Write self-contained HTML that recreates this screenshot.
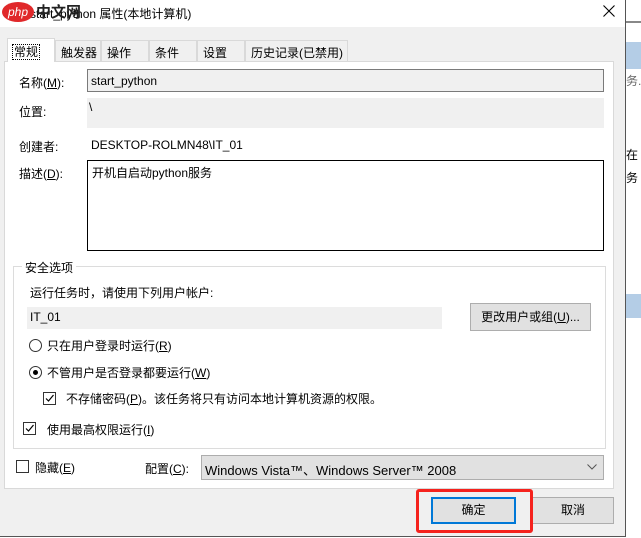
<!DOCTYPE html>
<html><head><meta charset="utf-8"><style>
*{box-sizing:border-box;margin:0;padding:0}
body{width:641px;height:538px;overflow:hidden;background:#fff;font-family:"Liberation Sans","Microsoft YaHei","Noto Sans CJK SC",sans-serif;font-size:12px;color:#000;position:relative}
.a{position:absolute;white-space:nowrap}
.t{position:absolute;top:40px;height:21px;border:1px solid #d9d9d9;border-bottom:none;background:#f0f0f0;padding:3px 0 0 5px;font-size:12px}
.cb{position:absolute;width:13px;height:13px;border:1px solid #333;background:#fff}
.rd{position:absolute;width:13px;height:13px;border:1px solid #333;border-radius:50%;background:#fff}
u{text-decoration:underline}
</style></head><body>
<div class="a" style="left:626px;top:0;width:15px;height:538px;background:#fff"></div>
<div class="a" style="left:626px;top:21px;width:15px;height:2px;background:#888"></div>
<div class="a" style="left:626px;top:42px;width:15px;height:27px;background:#b4cde6"></div>
<div class="a" style="left:626px;top:72px;font-size:12px;color:#666">务.</div>
<div class="a" style="left:626px;top:146px">在</div>
<div class="a" style="left:626px;top:169px">务</div>
<div class="a" style="left:626px;top:294px;width:15px;height:24px;background:#b4cde6"></div>
<div class="a" style="left:0;top:0;width:626px;height:537px;background:#f0f0f0;border-right:1px solid #555;border-bottom:1px solid #555"></div>
<div class="a" style="left:0;top:0;width:625px;height:27px;background:#fff"></div>
<div class="a" style="left:30px;top:5px;font-size:12px">start_python 属性(本地计算机)</div>
<div class="a" style="left:2px;top:2px;width:32px;height:20px;border-radius:50%;background:#e0282a;color:#fff;font-size:12px;font-style:italic;text-align:center;line-height:20px">php</div>
<div class="a" style="left:36px;top:1px;font-size:15px;font-weight:bold;color:#222">中文网</div>
<svg class="a" style="left:603px;top:5px" width="12" height="12"><path d="M0.5 0.5L11.5 11.5M11.5 0.5L0.5 11.5" stroke="#000" stroke-width="1.1"/></svg>
<div class="a" style="left:4px;top:61px;width:610px;height:428px;background:#fff;border:1px solid #d9d9d9"></div>
<div class="t" style="left:7px;top:38px;width:48px;height:24px;background:#fff;border-color:#d9d9d9;z-index:2;padding-top:4px"><span style="outline:1px dotted #000;padding:0 1px">常规</span></div>
<div class="t" style="left:55px;width:46px">触发器</div>
<div class="t" style="left:101px;width:48px">操作</div>
<div class="t" style="left:149px;width:48px">条件</div>
<div class="t" style="left:197px;width:48px">设置</div>
<div class="t" style="left:245px;width:103px">历史记录(已禁用)</div>
<div class="a" style="left:19px;top:74px">名称(<u>M</u>):</div>
<div class="a" style="left:87px;top:69px;width:517px;height:23px;background:#f0f0f0;border:1px solid #7a7a7a;padding:4px 3px">start_python</div>
<div class="a" style="left:19px;top:103px">位置:</div>
<div class="a" style="left:87px;top:98px;width:517px;height:30px;background:#f0f0f0;padding:2px 2px">\</div>
<div class="a" style="left:19px;top:138px">创建者:</div>
<div class="a" style="left:91px;top:138px">DESKTOP-ROLMN48\IT_01</div>
<div class="a" style="left:19px;top:165px">描述(<u>D</u>):</div>
<div class="a" style="left:87px;top:160px;width:517px;height:91px;border:1px solid #000;padding:3px 4px">开机自启动python服务</div>
<div class="a" style="left:13px;top:266px;width:593px;height:183px;border:1px solid #dcdcdc"></div>
<div class="a" style="left:22px;top:259px;background:#fff;padding:0 3px">安全选项</div>
<div class="a" style="left:30px;top:284px">运行任务时，请使用下列用户帐户:</div>
<div class="a" style="left:27px;top:307px;width:415px;height:22px;background:#f0f0f0;padding:3px 3px">IT_01</div>
<div class="a" style="left:470px;top:303px;width:121px;height:28px;background:#e1e1e1;border:1px solid #adadad;text-align:center;line-height:26px">更改用户或组(<u>U</u>)...</div>
<div class="rd" style="left:29px;top:339px"></div>
<div class="a" style="left:47px;top:337px">只在用户登录时运行(<u>R</u>)</div>
<div class="rd" style="left:29px;top:366px"></div>
<div class="a" style="left:33px;top:370px;width:5px;height:5px;border-radius:50%;background:#000"></div>
<div class="a" style="left:47px;top:364px">不管用户是否登录都要运行(<u>W</u>)</div>
<div class="cb" style="left:43px;top:392px"></div>
<svg class="a" style="left:43px;top:392px" width="13" height="13"><path d="M3 6.5L5.5 9L10.5 3" fill="none" stroke="#000" stroke-width="1.2"/></svg>
<div class="a" style="left:66px;top:390px">不存储密码(<u>P</u>)。该任务将只有访问本地计算机资源的权限。</div>
<div class="cb" style="left:23px;top:422px"></div>
<svg class="a" style="left:23px;top:422px" width="13" height="13"><path d="M3 6.5L5.5 9L10.5 3" fill="none" stroke="#000" stroke-width="1.2"/></svg>
<div class="a" style="left:47px;top:421px">使用最高权限运行(<u>I</u>)</div>
<div class="cb" style="left:16px;top:460px"></div>
<div class="a" style="left:35px;top:459px">隐藏(<u>E</u>)</div>
<div class="a" style="left:145px;top:460px">配置(<u>C</u>):</div>
<div class="a" style="left:201px;top:455px;width:403px;height:25px;background:#e1e1e1;border:1px solid #adadad;padding:4px 3px;font-size:13px">Windows Vista™、Windows Server™ 2008</div>
<svg class="a" style="left:587px;top:464px" width="10" height="6"><path d="M0.5 0.5L5 5L9.5 0.5" fill="none" stroke="#555"/></svg>
<div class="a" style="left:431px;top:497px;width:85px;height:27px;background:#e1e1e1;border:2px solid #0078d7;text-align:center;line-height:23px">确定</div>
<div class="a" style="left:532px;top:497px;width:82px;height:27px;background:#e1e1e1;border:1px solid #adadad;text-align:center;line-height:25px">取消</div>
<div class="a" style="left:416px;top:489px;width:117px;height:44px;border:3px solid #f5221d;border-radius:3px"></div>
</body></html>
